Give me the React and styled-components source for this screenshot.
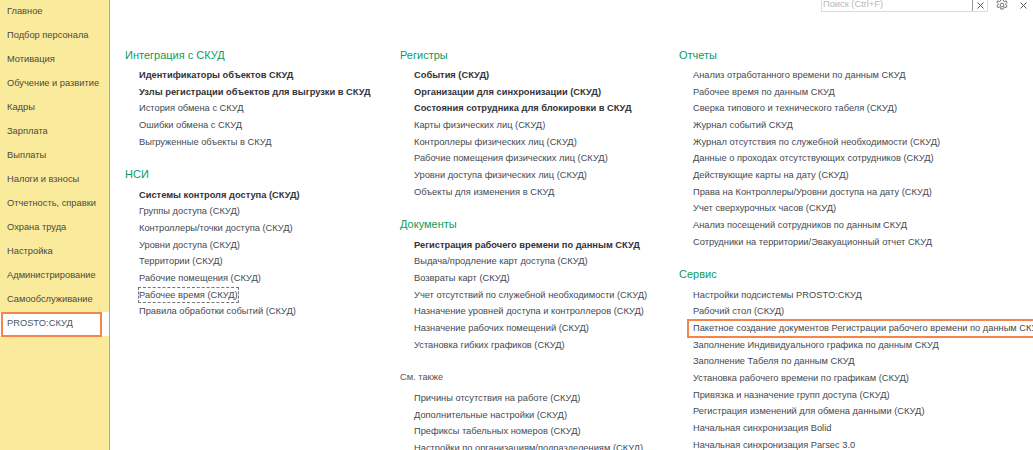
import React from "react";
import styled, { createGlobalStyle } from "styled-components";

const GlobalStyle = createGlobalStyle`
  html, body {
    margin: 0;
    padding: 0;
    background: #fff;
  }
  body {
    font-family: "Liberation Sans", Arial, sans-serif;
  }
`;

const sidebarItems = [
  "Главное",
  "Подбор персонала",
  "Мотивация",
  "Обучение и развитие",
  "Кадры",
  "Зарплата",
  "Выплаты",
  "Налоги и взносы",
  "Отчетность, справки",
  "Охрана труда",
  "Настройка",
  "Администрирование",
  "Самообслуживание",
  "PROSTO:СКУД",
];

const columns = [
  [
    {
      title: "Интеграция с СКУД",
      links: [
        { text: "Идентификаторы объектов СКУД", bold: true },
        { text: "Узлы регистрации объектов для выгрузки в СКУД", bold: true },
        { text: "История обмена с СКУД" },
        { text: "Ошибки обмена с СКУД" },
        { text: "Выгруженные объекты в СКУД" },
      ],
    },
    {
      title: "НСИ",
      links: [
        { text: "Системы контроля доступа (СКУД)", bold: true },
        { text: "Группы доступа (СКУД)" },
        { text: "Контроллеры/точки доступа (СКУД)" },
        { text: "Уровни доступа (СКУД)" },
        { text: "Территории (СКУД)" },
        { text: "Рабочие помещения (СКУД)" },
        { text: "Рабочее время (СКУД)", focused: true },
        { text: "Правила обработки событий (СКУД)" },
      ],
    },
  ],
  [
    {
      title: "Регистры",
      links: [
        { text: "События (СКУД)", bold: true },
        { text: "Организации для синхронизации (СКУД)", bold: true },
        { text: "Состояния сотрудника для блокировки в СКУД", bold: true },
        { text: "Карты физических лиц (СКУД)" },
        { text: "Контроллеры физических лиц (СКУД)" },
        { text: "Рабочие помещения физических лиц (СКУД)" },
        { text: "Уровни доступа физических лиц (СКУД)" },
        { text: "Объекты для изменения в СКУД" },
      ],
    },
    {
      title: "Документы",
      links: [
        { text: "Регистрация рабочего времени по данным СКУД", bold: true },
        { text: "Выдача/продление карт доступа (СКУД)" },
        { text: "Возвраты карт (СКУД)" },
        { text: "Учет отсутствий по служебной необходимости (СКУД)" },
        { text: "Назначение уровней доступа и контроллеров (СКУД)" },
        { text: "Назначение рабочих помещений (СКУД)" },
        { text: "Установка гибких графиков (СКУД)" },
      ],
    },
    {
      title: "См. также",
      muted: true,
      links: [
        { text: "Причины отсутствия на работе (СКУД)" },
        { text: "Дополнительные настройки (СКУД)" },
        { text: "Префиксы табельных номеров (СКУД)" },
        { text: "Настройки по организациям/подразделениям (СКУД)" },
      ],
    },
  ],
  [
    {
      title: "Отчеты",
      links: [
        { text: "Анализ отработанного времени по данным СКУД" },
        { text: "Рабочее время по данным СКУД" },
        { text: "Сверка типового и технического табеля (СКУД)" },
        { text: "Журнал событий СКУД" },
        { text: "Журнал отсутствия по служебной необходимости (СКУД)" },
        { text: "Данные о проходах отсутствующих сотрудников (СКУД)" },
        { text: "Действующие карты на дату (СКУД)" },
        { text: "Права на Контроллеры/Уровни доступа на дату (СКУД)" },
        { text: "Учет сверхурочных часов (СКУД)" },
        { text: "Анализ посещений сотрудников по данным СКУД" },
        { text: "Сотрудники на территории/Эвакуационный отчет СКУД" },
      ],
    },
    {
      title: "Сервис",
      links: [
        { text: "Настройки подсистемы PROSTO:СКУД" },
        { text: "Рабочий стол (СКУД)" },
        { text: "Пакетное создание документов Регистрации рабочего времени по данным СКУД", marked: true },
        { text: "Заполнение Индивидуального графика по данным СКУД" },
        { text: "Заполнение Табеля по данным СКУД" },
        { text: "Установка рабочего времени по графикам (СКУД)" },
        { text: "Привязка и назначение групп доступа (СКУД)" },
        { text: "Регистрация изменений для обмена данными (СКУД)" },
        { text: "Начальная синхронизация Bolid" },
        { text: "Начальная синхронизация Parsec 3.0" },
      ],
    },
  ],
];

const CloseGlyph = () => (
  <svg width="7" height="7" viewBox="0 0 7 7" fill="none" stroke="#555" strokeWidth="1">
    <path d="M0.5 0.5L6.5 6.5M6.5 0.5L0.5 6.5" />
  </svg>
);

const GearGlyph = () => (
  <svg width="12" height="12" viewBox="0 0 13 13" fill="none" stroke="#666" strokeWidth="1">
    <path d="M5.2 0.6h2.6l.4 1.6 1.3.6 1.5-.8 1 1.8-1.2 1.2v1.4l1.2 1.2-1 1.8-1.5-.8-1.3.6-.4 1.7H5.2l-.4-1.7-1.3-.6-1.5.8-1-1.8 1.2-1.2V5l-1.2-1.2 1-1.8 1.5.8 1.3-.6z" />
    <circle cx="6.5" cy="6.5" r="2" />
  </svg>
);

export default function App() {
  return (
    <>
      <GlobalStyle />
      <Page>
        <Sidebar>
          {sidebarItems.map((item) => (
            <SideItem key={item} $active={item === "PROSTO:СКУД"}>
              <span>{item}</span>
            </SideItem>
          ))}
        </Sidebar>
        <Main>
          <TopBar>
            <SearchBox>
              <SearchInput>Поиск (Ctrl+F)</SearchInput>
              <SearchClear>
                <CloseGlyph />
              </SearchClear>
            </SearchBox>
            <GearButton>
              <GearGlyph />
            </GearButton>
            <CloseButton>
              <CloseGlyph />
            </CloseButton>
          </TopBar>
          <Columns>
            {columns.map((sections, i) => (
              <Column key={i}>
                {sections.map((section) => (
                  <Section key={section.title}>
                    <SectionTitle $muted={section.muted}>{section.title}</SectionTitle>
                    {section.links.map((link) => (
                      <LinkRow key={link.text} $bold={link.bold} $marked={link.marked}>
                        <LinkText $focused={link.focused}>{link.text}</LinkText>
                      </LinkRow>
                    ))}
                  </Section>
                ))}
              </Column>
            ))}
          </Columns>
        </Main>
      </Page>
    </>
  );
}

const Page = styled.div`
  display: flex;
  width: 1033px;
  height: 450px;
  overflow: hidden;
  background: #fff;
`;

const Sidebar = styled.nav`
  flex: 0 0 109px;
  width: 109px;
  height: 450px;
  box-sizing: content-box;
  background: #faea9b;
  border-right: 1px solid #a8a8a0;
`;

const SideItem = styled.div`
  box-sizing: border-box;
  height: 24px;
  padding-left: 7px;
  font-size: 9.3px;
  line-height: 23px;
  white-space: nowrap;
  color: #4a4a42;
  position: relative;

  ${(p) =>
    p.$active &&
    `
    background: #fff;
    color: #4d5560;
    &::after {
      content: "";
      position: absolute;
      left: 1px;
      top: 0;
      width: 101px;
      height: 25px;
      box-sizing: border-box;
      border: 2px solid #f5844a;
    }
  `}
`;

const Main = styled.main`
  flex: 1;
  min-width: 0;
  height: 450px;
  overflow: hidden;
`;

const TopBar = styled.div`
  display: flex;
  align-items: flex-start;
  height: 46.5px;
  padding-left: 711px;
`;

const SearchBox = styled.div`
  display: flex;
  height: 12px;
  width: 167px;
  box-sizing: border-box;
  border: 1px solid #dcdcdc;
  border-top: none;
`;

const SearchInput = styled.div`
  flex: 1;
  padding-left: 1px;
  font-size: 9.3px;
  line-height: 9px;
  color: #b9b9b9;
  border-right: 1px solid #9a9a9a;
  white-space: nowrap;
`;

const SearchClear = styled.div`
  width: 14px;
  display: flex;
  align-items: center;
  justify-content: center;
`;

const GearButton = styled.div`
  width: 28px;
  height: 10px;
  display: flex;
  align-items: center;
  justify-content: center;
`;

const CloseButton = styled.div`
  height: 10px;
  margin-left: 4px;
  display: flex;
  align-items: center;
`;

const Columns = styled.div`
  display: grid;
  grid-template-columns: 275px 279px 400px;
  padding-left: 15px;
`;

const Column = styled.div`
  display: flex;
  flex-direction: column;
  gap: 16px;
  min-width: 0;
`;

const Section = styled.section`
  display: flex;
  flex-direction: column;
`;

const SectionTitle = styled.h3`
  margin: 0 0 3.5px;
  height: 17px;
  font-size: ${(p) => (p.$muted ? "9.3px" : "11px")};
  line-height: 17px;
  font-weight: 400;
  color: ${(p) => (p.$muted ? "#555" : "#0e9a5e")};
`;

const LinkRow = styled.div`
  height: 16.67px;
  padding-left: 14px;
  font-size: 9.3px;
  line-height: 16.67px;
  white-space: nowrap;
  font-weight: ${(p) => (p.$bold ? 700 : 400)};
  color: ${(p) => (p.$bold ? "#33333a" : "#444a52")};
  position: relative;

  ${(p) =>
    p.$marked &&
    `
    &::after {
      content: "";
      position: absolute;
      left: 8px;
      top: -1px;
      width: 400px;
      height: 19px;
      box-sizing: border-box;
      border: 2px solid #f5844a;
    }
  `}
`;

const LinkText = styled.span`
  display: inline-block;
  ${(p) =>
    p.$focused &&
    `
    outline: 1px dashed #777;
    outline-offset: 0px;
    line-height: 14px;
  `}
`;
